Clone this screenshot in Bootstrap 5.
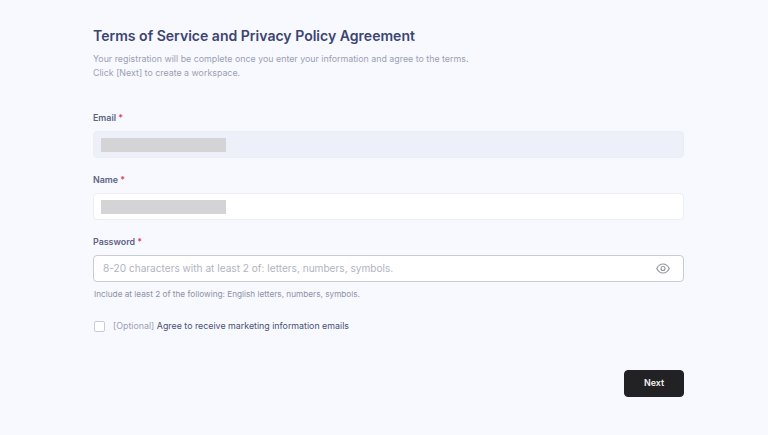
<!DOCTYPE html>
<html lang="en">
<head>
<meta charset="utf-8">
<title>Terms of Service and Privacy Policy Agreement</title>
<link href="https://cdn.jsdelivr.net/npm/bootstrap@5.3.0/dist/css/bootstrap.min.css" rel="stylesheet">
<style>
html,body{height:100%}
body{background:#f8f9fe;font-family:Inter,"Liberation Sans",sans-serif;color:#3a4270;overflow:hidden}
.page-wrap{width:591px;margin-left:93px;padding-top:26px}
.page-title{font-size:14.05px;line-height:19px;font-weight:600;color:#3c4570;margin:0 0 7px}
.page-sub{font-size:8.85px;line-height:14px;color:#9a9fb5;margin:0 0 31px}
.field-label{font-size:8.9px;line-height:13px;font-weight:600;color:#5d6385;margin:0 0 7px;display:block}
.req{color:#d9405f}
.field-box{height:27px;border:1px solid #eceef5;border-radius:4px;background:#fff;padding:0 7px;display:flex;align-items:center}
.field-box.is-off{background:#edf0f9}
.mask{width:125px;height:14px;background:#d4d4d6}
.field-gap{margin-bottom:15px}
.pw-box{border-color:#c9cbd6;padding:0 13px 0 9px;justify-content:space-between;font-size:10.1px;color:#b1b4c2}
.hint{font-size:8.23px;line-height:12px;color:#8d92a8;margin:6px 0 0 1px}
.opt-row{margin-top:19px;font-size:8.85px;line-height:14px;gap:8px;margin-left:1px}
.opt-box{width:11px;height:11px;border:1px solid #c9ccd8;border-radius:2px;background:#fff;flex:none}
.opt-muted{color:#9a9fb5}
.opt-main{color:#4a5174}
.next-btn{width:60px;height:27px;padding:0;background:#222224;border:1px solid #222224;border-radius:4px;color:#f2f2f2;font-size:8.9px;font-weight:600;line-height:1}
.next-btn:hover{background:#222224;color:#f2f2f2}
.act-row{margin-top:37px}
</style>
</head>
<body>
<main class="page-wrap">
  <h1 class="page-title">Terms of Service and Privacy Policy Agreement</h1>
  <p class="page-sub">Your registration will be complete once you enter your information and agree to the terms.<br>Click [Next] to create a workspace.</p>
  <form>
    <div class="field-gap">
      <span class="field-label">Email <span class="req">*</span></span>
      <div class="field-box is-off"><div class="mask"></div></div>
    </div>
    <div class="field-gap">
      <span class="field-label">Name <span class="req">*</span></span>
      <div class="field-box"><div class="mask"></div></div>
    </div>
    <div>
      <span class="field-label">Password <span class="req">*</span></span>
      <div class="field-box pw-box">
        <span>8-20 characters with at least 2 of: letters, numbers, symbols.</span>
        <svg width="14" height="11" viewBox="0 0 14 11" fill="none" stroke="#92969f" stroke-width="1.1" aria-hidden="true"><path d="M.7 5.5C2.2 2.6 4.4 1 7 1s4.800 1.600 6.300 4.500C11.800 8.400 9.600 10 7 10S2.200 8.400.7 5.500Z"/><circle cx="7" cy="5.500" r="2"/></svg>
      </div>
      <p class="hint">Include at least 2 of the following: English letters, numbers, symbols.</p>
    </div>
    <div class="d-flex align-items-center opt-row">
      <span class="opt-box"></span>
      <span><span class="opt-muted">[Optional]</span> <span class="opt-main">Agree to receive marketing information emails</span></span>
    </div>
    <div class="d-flex justify-content-end act-row">
      <button type="button" class="btn next-btn">Next</button>
    </div>
  </form>
</main>
<script src="https://cdn.jsdelivr.net/npm/bootstrap@5.3.0/dist/js/bootstrap.bundle.min.js"></script>
</body>
</html>
